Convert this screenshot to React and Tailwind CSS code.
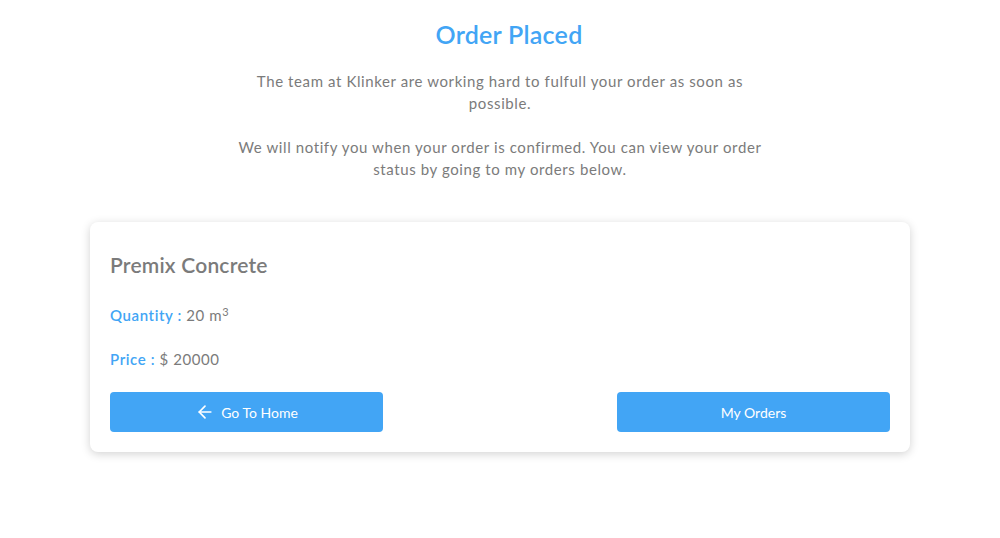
import React from 'react'
import { ArrowLeft } from 'lucide-react'

export default function App() {
  return (
    <div className="min-h-[538px] bg-white font-['Lato','Noto_Sans',sans-serif] text-[#7b7b7b]">
      <div className="flex flex-col items-center pt-[18px]">
        <h1 className="ml-[18px] text-[25px] leading-[32px] font-semibold tracking-[0.01em] text-[#42a5f5]">Order Placed</h1>
        <p className="mt-5 w-[530px] text-center text-[15px] leading-[22px] tracking-[0.04em]">
          The team at Klinker are working hard to fulfull your order as soon as possible.
        </p>
        <p className="mt-[22px] w-[530px] text-center text-[15px] leading-[22px] tracking-[0.04em]">
          We will notify you when your order is confirmed. You can view your order status by going to my orders below.
        </p>
      </div>

      <div className="mx-[90px] mt-[42px] rounded-lg bg-white p-5 shadow-[0_2px_10px_rgba(0,0,0,0.18)]">
        <h2 className="mt-[10px] text-[21px] leading-[26px] font-semibold tracking-[0.01em] text-[#7b7b7b]">Premix Concrete</h2>
        <div className="mt-[26px] text-[15px] leading-[22px] tracking-[0.04em]">
          <span className="font-semibold text-[#42a5f5]">Quantity : </span>
          20 m<sup className="text-[11px]">3</sup>
        </div>
        <div className="mt-[22px] text-[15px] leading-[22px] tracking-[0.04em]">
          <span className="font-semibold text-[#42a5f5]">Price : </span>
          $ 20000
        </div>
        <div className="mt-[22px] flex justify-between">
          <button className="flex h-10 w-[273px] items-center justify-center gap-[6px] rounded bg-[#42a5f5] text-[14px] text-white">
            <ArrowLeft className="h-5 w-5" strokeWidth={2} />
            Go To Home
          </button>
          <button className="flex h-10 w-[273px] items-center justify-center rounded bg-[#42a5f5] text-[14px] text-white">
            My Orders
          </button>
        </div>
      </div>
    </div>
  )
}
